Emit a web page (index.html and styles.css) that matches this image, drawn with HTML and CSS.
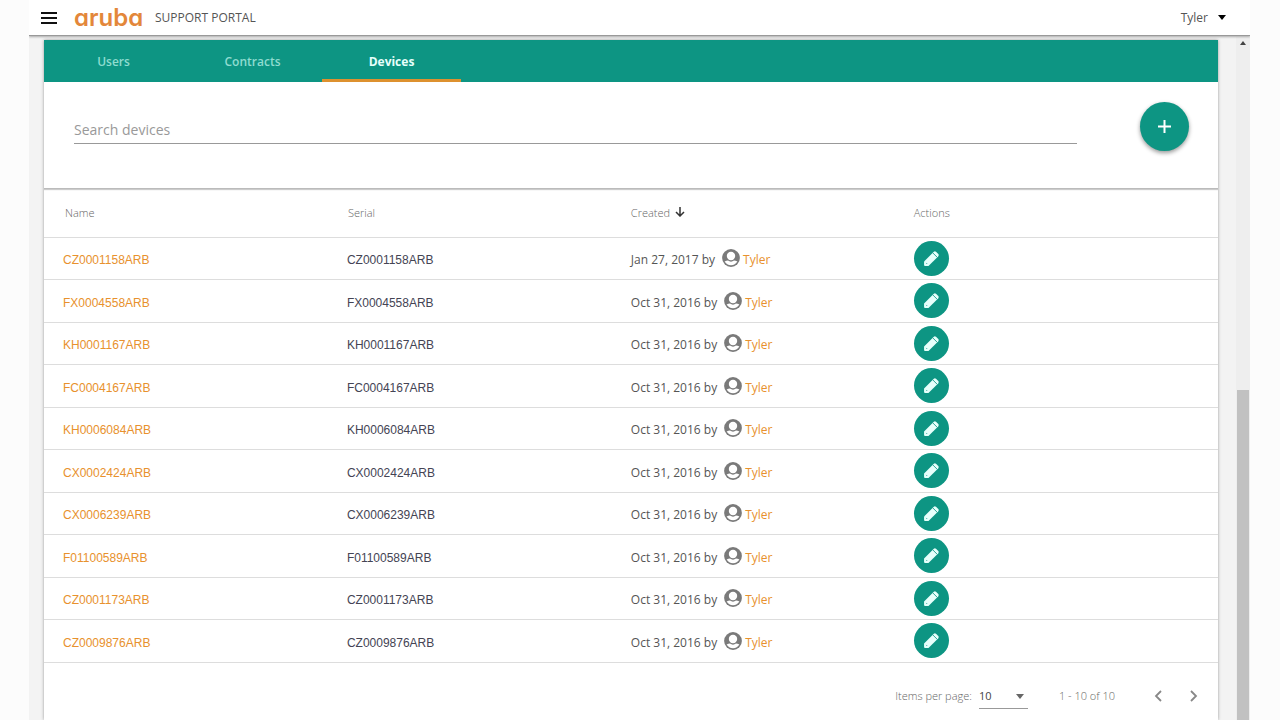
FILE: index.html
```html
<!doctype html>
<html lang="en">

    <head>
        <meta charset="utf-8">
        <title>Support Portal - Devices</title>
        <link rel="stylesheet" href="styles.css">
    </head>

    <body>

        <!-- shared icons -->
        <svg class="sprite" aria-hidden="true">
            <symbol id="icoUser" viewBox="0 0 18 18">
                <circle cx="9" cy="9" r="8.900" fill="#7a7a7a"/>
                <circle cx="9" cy="7" r="4.200" fill="#fff"/>
                <path fill="#fff" d="M2.600 12.600Q4.500 11.600 6 11.600Q9 13.800 12 11.600Q13.500 11.600 15.400 12.600Q13.200 16.300 9 16.300Q4.800 16.300 2.600 12.600z"/>
            </symbol>
            <symbol id="icoPencil" viewBox="0 0 16 16">
                <path fill="#e6fffb" d="M1 10.800L10.200 1.600Q11.200.800 12.200 1.600L14.400 3.800Q15.200 4.800 14.400 5.800L5.200 15H2Q1 15 1 14z"/>
                <path fill="none" stroke="#0d9583" stroke-width=".8" d="M9.300 2.800L13.200 6.700M3 12.200L3.800 13"/>
            </symbol>
        </svg>

        <div class="app">

            <header class="topbar">
                <button class="btnMenu" aria-label="Menu">
                    <svg width="16" height="12" viewBox="0 0 16 12"><path stroke="#111" stroke-width="2" d="M0 1H16M0 6H16M0 11H16"/></svg>
                </button>
                <a class="logo" href="#">aruba</a>
                <span class="portal">SUPPORT PORTAL</span>
                <button class="btnUser">Tyler
                    <svg width="8" height="5" viewBox="0 0 8 5"><path d="M0 0H8L4 5z"/></svg>
                </button>
            </header>

            <div class="viewport">
                <main class="card">

                    <nav class="tabs">
                        <a class="tab" href="#">Users</a>
                        <a class="tab" href="#">Contracts</a>
                        <a class="tab active" href="#">Devices</a>
                    </nav>

                    <div class="search">
                        <input type="text" class="txtSearch" placeholder="Search devices" aria-label="Search devices">
                        <button class="btnAdd" aria-label="Add device">
                            <svg width="13" height="13" viewBox="0 0 13 13"><path stroke="#fff" stroke-width="2" d="M6.500 0V13M0 6.500H13"/></svg>
                        </button>
                    </div>

                    <table class="tblDevices">
                        <thead>
                            <tr>
                                <th class="colName">Name</th>
                                <th class="colSerial">Serial</th>
                                <th class="colCreated">Created
                                    <svg class="sort" width="10" height="10" viewBox="0 0 10 10"><path fill="none" stroke="#333" stroke-width="1.500" d="M5 0V9M1 5L5 9L9 5"/></svg>
                                </th>
                                <th>Actions</th>
                            </tr>
                        </thead>
                        <tbody id="devices"></tbody>
                    </table>

                    <footer class="pager">
                        <label for="selItems">Items per page:</label>
                        <div class="selWrap">
                            <select id="selItems" class="selItems">
                                <option>10</option>
                                <option>25</option>
                                <option>50</option>
                            </select>
                            <svg class="selArrow" width="8" height="5" viewBox="0 0 8 5"><path fill="#666" d="M0 0H8L4 5z"/></svg>
                        </div>
                        <span class="range">1 - 10 of 10</span>
                        <button class="btnPage" aria-label="Previous page">
                            <svg width="8" height="12" viewBox="0 0 8 12"><path fill="none" stroke="#888" stroke-width="1.800" d="M7 1L2 6L7 11"/></svg>
                        </button>
                        <button class="btnPage" aria-label="Next page">
                            <svg width="8" height="12" viewBox="0 0 8 12"><path fill="none" stroke="#888" stroke-width="1.800" d="M1 1L6 6L1 11"/></svg>
                        </button>
                    </footer>

                </main>

                <div class="scrollbar">
                    <svg width="6" height="4" viewBox="0 0 6 4"><path fill="#444" d="M0 4L3 0L6 4z"/></svg>
                    <div class="thumb"></div>
                </div>
            </div>

        </div>

        <script src="devices.js"></script>
    </body>

</html>
```
FILE: styles.css
```css
* {
    box-sizing: border-box;
}

body {
    margin: 0;
    background: #fcfcfc;
    color: #555;
    font: 12px/18px "Open Sans", sans-serif;
}

button {
    border: 0;
    padding: 0;
    background: none;
    color: inherit;
    font: inherit;
    cursor: pointer;
}

a {
    color: #e8912d;
    text-decoration: none;
}

.sprite {
    display: none;
}

.app {
    display: flex;
    flex-direction: column;
    height: 100vh;
    margin: 0 30px 0 29px;
    overflow: hidden;
}

/* top bar */

.topbar {
    display: flex;
    flex: none;
    align-items: center;
    height: 36px;
    padding: 0 24px 0 12px;
    background: #fff;
    border-bottom: 1px solid #999;
    box-shadow: 0 1px 2px #aaa;
    z-index: 1;
}

.btnMenu {
    display: flex;
    margin-right: 17px;
}

.logo {
    width: 70px;
    margin-right: 11px;
    color: #e3873a;
    font: 600 24px/28px Inter, sans-serif;
    font-feature-settings: "cv11";
}

.portal {
    flex: 1;
}

.btnUser {
    display: flex;
    align-items: center;
    gap: 10px;
    font-size: 12px;
}

/* scrolling area */

.viewport {
    display: flex;
    flex: 1;
    min-height: 0;
    padding-left: 15px;
    background: #f3f3f3;
}

.card {
    flex: 1;
    margin: 4px 18px 0 0;
    background: #fff;
    box-shadow: 0 0 3px #999;
}

.scrollbar {
    display: flex;
    flex-direction: column;
    align-items: center;
    justify-content: space-between;
    width: 14px;
    padding-top: 5px;
    background: #eee;
}

.thumb {
    width: 12px;
    height: 330px;
    background: #c1c1c1;
}

/* tabs */

.tabs {
    display: flex;
    height: 42px;
    background: #0d9583;
}

.tab {
    width: 139px;
    padding-top: 3px;
    border-bottom: 3px solid transparent;
    color: #8fdcd0;
    font-weight: 600;
    line-height: 38px;
    text-align: center;
}

.tab.active {
    border-color: #dd912f;
    color: #e6fffb;
    font-weight: 700;
}

/* search */

.search {
    display: flex;
    align-items: flex-start;
    justify-content: space-between;
    height: 107px;
    padding: 20px 29px 0 30px;
    border-bottom: 1px solid #bbb;
    box-shadow: 0 1px 1px #ccc;
}

.txtSearch {
    flex: 1;
    height: 28px;
    margin: 14px 63px 0 0;
    padding: 0;
    border: 0;
    border-bottom: 1px solid #999;
    outline: 0;
    font: 14px/20px "Open Sans", sans-serif;
}

.txtSearch::placeholder {
    color: #999;
}

.btnAdd {
    display: flex;
    align-items: center;
    justify-content: center;
    width: 49px;
    height: 49px;
    border-radius: 50%;
    background: #0d9583;
    box-shadow: 0 2px 4px #999;
}

/* devices table */

.tblDevices {
    width: 100%;
    border-collapse: collapse;
    table-layout: fixed;
}

.tblDevices th {
    height: 48px;
    padding: 0 0 0 1px;
    border-bottom: 1px solid #ddd;
    color: #666;
    font-size: 11px;
    font-weight: 300;
    text-align: left;
}

.tblDevices td {
    height: 42px;
    padding: 0;
    border-bottom: 1px solid #ddd;
}

.tblDevices tr:nth-child(even) td {
    height: 43px;
}

.tblDevices .colName {
    width: 25.8%;
    padding-left: 21px;
}

.colSerial,
.colCreated {
    width: 24.1%;
}

.sort {
    margin-left: 2px;
}

.tblDevices .name,
.tblDevices .serial {
    padding-top: 4px;
    font: 12px/18px "Liberation Sans", sans-serif;
}

.tblDevices .name {
    padding-left: 19px;
}

.serial {
    color: #444454;
}

.created {
    display: flex;
    align-items: center;
    padding: 4px 0 0 1px;
}

.created svg {
    width: 18px;
    height: 18px;
    margin: 0 3px 4px 7px;
}

.btnEdit {
    display: flex;
    align-items: center;
    justify-content: center;
    width: 35px;
    height: 35px;
    margin-left: 1px;
    border-radius: 50%;
    background: #0d9583;
}

.btnEdit svg {
    width: 17px;
    height: 17px;
}

/* paginator */

.pager {
    display: flex;
    align-items: center;
    justify-content: flex-end;
    padding: 21px 20px 0;
    color: #666;
    font-size: 11px;
    font-weight: 300;
}

.selWrap {
    position: relative;
    width: 49px;
    margin: 0 31px 0 7px;
}

.selItems {
    width: 100%;
    height: 25px;
    padding: 0;
    border: 0;
    border-bottom: 1px solid #999;
    background: none;
    color: #444;
    font: 11px/18px "Open Sans", sans-serif;
    appearance: none;
}

.selArrow {
    position: absolute;
    top: 10px;
    right: 4px;
    pointer-events: none;
}

.range {
    margin-right: 39px;
}

.btnPage {
    display: flex;
}

.btnPage + .btnPage {
    margin-left: 28px;
}
```
FILE: devices.js
```js
var devices = [
    ["CZ0001158ARB", "Jan 27, 2017"],
    ["FX0004558ARB", "Oct 31, 2016"],
    ["KH0001167ARB", "Oct 31, 2016"],
    ["FC0004167ARB", "Oct 31, 2016"],
    ["KH0006084ARB", "Oct 31, 2016"],
    ["CX0002424ARB", "Oct 31, 2016"],
    ["CX0006239ARB", "Oct 31, 2016"],
    ["F01100589ARB", "Oct 31, 2016"],
    ["CZ0001173ARB", "Oct 31, 2016"],
    ["CZ0009876ARB", "Oct 31, 2016"]
];

var rows = "";

for (var i = 0; i < devices.length; i++) {
    var serial = devices[i][0];
    rows += '<tr>' +
        '<td class="name"><a href="#">' + serial + '</a></td>' +
        '<td class="serial">' + serial + '</td>' +
        '<td><div class="created">' + devices[i][1] + ' by' +
            '<svg><use href="#icoUser"/></svg><a href="#">Tyler</a></div></td>' +
        '<td><button class="btnEdit" aria-label="Edit ' + serial + '">' +
            '<svg><use href="#icoPencil"/></svg></button></td>' +
        '</tr>';
}

document.getElementById("devices").innerHTML = rows;
```
